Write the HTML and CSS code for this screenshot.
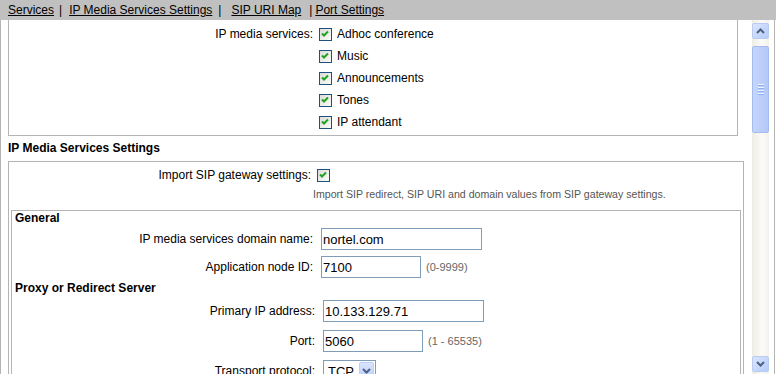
FILE: index.html
```html
<!DOCTYPE html>
<html lang="en">
<head>
    <meta charset="UTF-8">
    <title>IP Media Services</title>
    <link rel="stylesheet" href="styles.css">
</head>
<body>
    <div class="nav">
        <a href="#">Services</a><span class="sep">|</span>
        <a href="#">IP Media Services Settings</a><span class="sep sep-2">|</span>
        <a href="#">SIP URI Map</a><span class="sep sep-3">|</span>
        <a href="#">Port Settings</a>
    </div>

    <div class="frame">
        <div class="content">
            <!-- Services -->
            <div class="box box-services">
                <div class="row">
                    <div class="label">IP media services:</div>
                    <div class="field"><span class="check"><svg width="11" height="11" viewBox="0 0 11 11"><path d="M2 4.5l2 2 4-4" fill="none" stroke="#21a121" stroke-width="2"/></svg></span>Adhoc conference</div>
                </div>
                <div class="row">
                    <div class="label"></div>
                    <div class="field"><span class="check"><svg width="11" height="11" viewBox="0 0 11 11"><path d="M2 4.5l2 2 4-4" fill="none" stroke="#21a121" stroke-width="2"/></svg></span>Music</div>
                </div>
                <div class="row">
                    <div class="label"></div>
                    <div class="field"><span class="check"><svg width="11" height="11" viewBox="0 0 11 11"><path d="M2 4.5l2 2 4-4" fill="none" stroke="#21a121" stroke-width="2"/></svg></span>Announcements</div>
                </div>
                <div class="row">
                    <div class="label"></div>
                    <div class="field"><span class="check"><svg width="11" height="11" viewBox="0 0 11 11"><path d="M2 4.5l2 2 4-4" fill="none" stroke="#21a121" stroke-width="2"/></svg></span>Tones</div>
                </div>
                <div class="row">
                    <div class="label"></div>
                    <div class="field"><span class="check"><svg width="11" height="11" viewBox="0 0 11 11"><path d="M2 4.5l2 2 4-4" fill="none" stroke="#21a121" stroke-width="2"/></svg></span>IP attendant</div>
                </div>
            </div>

            <div class="section-title">IP Media Services Settings</div>

            <div class="box box-settings">
                <div class="row row-import">
                    <div class="label">Import SIP gateway settings:</div>
                    <div class="field"><span class="check"><svg width="11" height="11" viewBox="0 0 11 11"><path d="M2 4.5l2 2 4-4" fill="none" stroke="#21a121" stroke-width="2"/></svg></span></div>
                </div>
                <div class="note">Import SIP redirect, SIP URI and domain values from SIP gateway settings.</div>

                <div class="box box-inner">
                    <div class="group-title">General</div>
                    <div class="row row-general">
                        <div class="label">IP media services domain name:</div>
                        <input type="text" class="text-input wide" value="nortel.com">
                    </div>
                    <div class="row row-general">
                        <div class="label">Application node ID:</div>
                        <input type="text" class="text-input short" value="7100">
                        <span class="hint">(0-9999)</span>
                    </div>

                    <div class="group-title group-proxy">Proxy or Redirect Server</div>
                    <div class="row row-proxy">
                        <div class="label">Primary IP address:</div>
                        <input type="text" class="text-input wide" value="10.133.129.71">
                    </div>
                    <div class="row row-proxy">
                        <div class="label">Port:</div>
                        <input type="text" class="text-input short" value="5060">
                        <span class="hint">(1 - 65535)</span>
                    </div>
                    <div class="row row-proxy">
                        <div class="label">Transport protocol:</div>
                        <div class="select">
                            <span class="select-value">TCP</span>
                            <span class="select-btn"><svg width="9" height="6" viewBox="0 0 9 6"><path d="M1 1l3.5 3.5L8 1" fill="none" stroke="#4d6185" stroke-width="2"/></svg></span>
                        </div>
                    </div>
                </div>
            </div>
        </div>

        <!-- scrollbar -->
        <div class="scrollbar">
            <div class="sb-btn"><svg width="9" height="6" viewBox="0 0 9 6"><path d="M1 5l3.5-3.5L8 5" fill="none" stroke="#4d6185" stroke-width="2"/></svg></div>
            <div class="sb-track">
                <div class="sb-thumb">
                    <span class="grip"></span><span class="grip"></span><span class="grip"></span><span class="grip"></span>
                </div>
            </div>
            <div class="sb-btn"><svg width="9" height="6" viewBox="0 0 9 6"><path d="M1 1l3.5 3.5L8 1" fill="none" stroke="#4d6185" stroke-width="2"/></svg></div>
        </div>
    </div>
</body>
</html>
```

FILE: styles.css
```css
body {
    margin: 0;
    font-family: "Liberation Sans", Arial, sans-serif;
    font-size: 12px;
    color: #000;
    background: #fff;
    overflow: hidden;
}
.nav {
    height: 20px;
    background: #c0c0c0;
    display: flex;
    align-items: center;
    padding-left: 8px;
}
.nav a {
    color: #000;
    text-decoration: underline;
}
.sep {
    margin: 0 7px 0 5px;
}
.sep-2 {
    margin: 0 10px 0 6px;
}
.sep-3 {
    margin: 0 3px 0 8px;
}
/* scrolled frame */
.frame {
    display: flex;
    width: 775px;
    height: 354px;
    box-sizing: border-box;
    border-left: 1px solid #b4b4b4;
    border-right: 1px solid #b4b4b4;
    overflow: hidden;
}
.content {
    width: 750px;
    flex: none;
    overflow: hidden;
}
.box {
    border: 1px solid #b4b4b4;
    box-sizing: border-box;
}
.box-services {
    margin-left: 7px;
    width: 730px;
    border-top: none;
    padding: 3px 0 2px;
}
.row {
    display: flex;
    align-items: center;
    height: 22px;
}
.label {
    flex: none;
    width: 304px;
    text-align: right;
    margin-right: 6px;
}
.field {
    display: flex;
    align-items: center;
}
.check {
    width: 13px;
    height: 13px;
    box-sizing: border-box;
    border: 1px solid #1c5180;
    background: linear-gradient(135deg, #dcdcd7, #fbfbf9);
    display: inline-flex;
    margin-right: 5px;
}
.section-title {
    font-weight: bold;
    height: 25px;
    line-height: 25px;
    padding-left: 7px;
}
.box-settings {
    margin-left: 7px;
    width: 736px;
    padding-top: 1px;
}
.row-import {
    height: 24px;
}
.row-import .label {
    width: 302px;
}
.note {
    font-size: 10.6px;
    color: #555;
    line-height: 14px;
    margin-left: 304px;
    margin-bottom: 9px;
}
.box-inner {
    margin: 0 2px;
    width: 730px;
    border-bottom: none;
    height: 200px;
}
.group-title {
    font-weight: bold;
    height: 14px;
    line-height: 14px;
    padding-left: 3px;
}
.group-proxy {
    height: 15px;
    line-height: 15px;
}
.row-general {
    height: 28px;
}
.row-general .label {
    width: 301px;
    margin-right: 8px;
}
.row-proxy {
    height: 30px;
}
.row-proxy .label {
    width: 303px;
    margin-right: 8px;
}
.text-input {
    height: 22px;
    box-sizing: border-box;
    border: 1px solid #7f9db9;
    padding: 0 1px;
    margin: 0;
    font-family: "Liberation Sans", Arial, sans-serif;
    font-size: 13px;
    color: #000;
    outline: none;
}
.wide {
    width: 161px;
}
.short {
    width: 100px;
}
.hint {
    margin-left: 5px;
    font-size: 11px;
    color: #666;
}
.select {
    display: flex;
    align-items: center;
    width: 53px;
    height: 22px;
    box-sizing: border-box;
    border: 1px solid #7f9db9;
    padding: 1px;
    font-size: 13px;
}
.select-value {
    flex: 1;
    padding-left: 3px;
}
.select-btn {
    width: 15px;
    height: 18px;
    box-sizing: border-box;
    border: 1px solid #bccdf7;
    border-radius: 2px;
    background: linear-gradient(#dae5fd, #b8cdfb);
    display: flex;
    align-items: center;
    justify-content: center;
}
/* XP style scrollbar */
.scrollbar {
    width: 17px;
    flex: none;
    margin-left: 1px;
    display: flex;
    flex-direction: column;
    padding: 3px 0 2px;
    box-sizing: border-box;
    background: linear-gradient(to right, #eeede5, #fbfbf8 60%, #f3f1ec);
}
.sb-btn {
    height: 16px;
    flex: none;
    box-sizing: border-box;
    border: 1px solid #b9cbf3;
    border-radius: 2px;
    background: linear-gradient(135deg, #dbe6fe, #b6cbf9);
    display: flex;
    align-items: center;
    justify-content: center;
}
.sb-track {
    flex: 1;
    padding-top: 7px;
}
.sb-thumb {
    height: 87px;
    box-sizing: border-box;
    border: 1px solid #a3bbf0;
    border-radius: 2px;
    background: linear-gradient(to right, #c6d5fc, #bccffb 50%, #b4c8f8);
    display: flex;
    flex-direction: column;
    align-items: center;
    justify-content: center;
    gap: 1px;
}
.grip {
    width: 6px;
    height: 1px;
    background: #eef4fe;
    border-bottom: 1px solid #8caff5;
}
```
